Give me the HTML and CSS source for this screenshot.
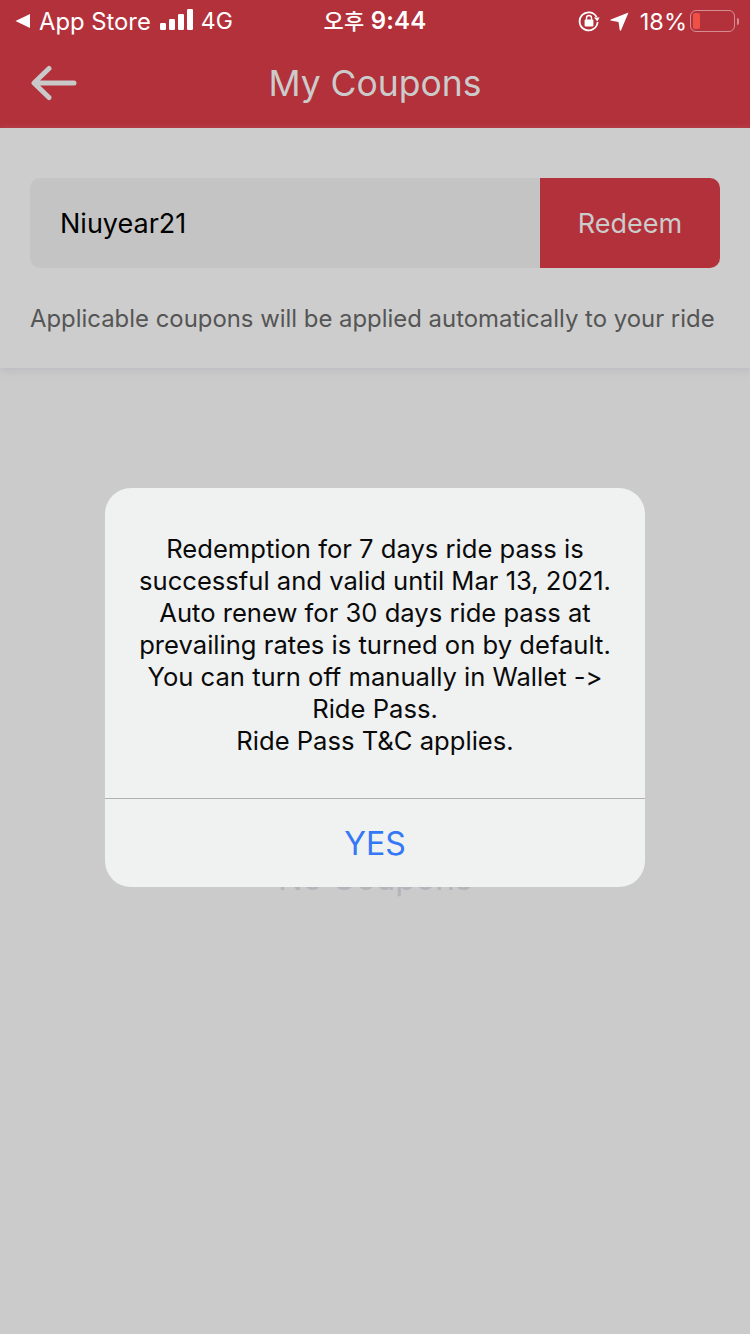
FILE: index.html
```html
<!DOCTYPE html>
<html lang="en">
<head>
<meta charset="utf-8">
<title>My Coupons</title>
<link rel="stylesheet" href="styles.css">
</head>
<body>
<div class="screen">
  <header class="header">
    <div class="status">
      <div class="status-left">
        <svg class="back-tri" width="16" height="16" viewBox="0 0 16 16"><path d="M0.5 8 L15 1 V15 Z" fill="#fff"/></svg>
        <span class="status-app">App Store</span>
        <svg class="signal" width="34" height="22" viewBox="0 0 34 22"><rect x="0" y="14" width="6" height="7" rx="1.2" fill="#fff"/><rect x="9" y="10" width="6" height="11" rx="1.2" fill="#fff"/><rect x="18" y="5" width="6" height="16" rx="1.2" fill="#fff"/><rect x="27" y="0" width="6" height="21" rx="1.2" fill="#fff"/></svg>
        <span class="status-net">4G</span>
      </div>
      <div class="status-time"><span class="ko">오후</span> 9:44</div>
      <div class="status-right">
        <svg class="lock" width="22" height="22" viewBox="0 0 22 22"><path d="M18.6 7.2 A9 9 0 1 0 19.6 12" fill="none" stroke="#fff" stroke-width="1.8"/><path d="M16 7.5 L21.6 7.5 L19.3 11.6 Z" fill="#fff"/><rect x="6.6" y="9.6" width="8.8" height="6.8" rx="1" fill="#fff"/><path d="M8.5 10 V8 A2.5 2.5 0 0 1 13.5 8 V10" fill="none" stroke="#fff" stroke-width="1.4"/></svg>
        <svg class="loc" width="19" height="19" viewBox="0 0 20 20"><path d="M19.5 0.5 L11.5 19.5 Q10.6 20 10.2 19 L9 10.6 L0.6 9 Q0 8.2 0.8 7.8 Z" fill="#fff"/></svg>
        <span class="status-pct">18%</span>
        <div class="battery"><div class="battery-level"></div></div>
        <div class="battery-tip"></div>
      </div>
    </div>
    <nav class="nav">
      <svg class="nav-back" width="46" height="36" viewBox="0 0 46 36"><path d="M43 18 H4 M18 3.5 L3 18 L18 32.5" fill="none" stroke="#c9c9c9" stroke-width="5" stroke-linecap="round" stroke-linejoin="round"/></svg>
      <h1 class="nav-title">My Coupons</h1>
    </nav>
  </header>

  <section class="panel">
    <div class="code-row">
      <div class="code-input">Niuyear21</div>
      <div class="code-btn">Redeem</div>
    </div>
    <p class="hint">Applicable coupons will be applied automatically to your ride</p>
  </section>

  <main class="empty">
    <div class="empty-label">No Coupons</div>
  </main>

  <div class="dialog">
    <div class="dialog-body">Redemption for 7 days ride pass is<br>successful and valid until Mar 13, 2021.<br>Auto renew for 30 days ride pass at<br>prevailing rates is turned on by default.<br>You can turn off manually in Wallet -&gt;<br>Ride Pass.<br>Ride Pass T&amp;C applies.</div>
    <div class="dialog-action">YES</div>
  </div>
</div>
</body>
</html>
```
FILE: styles.css
```css
* { box-sizing: border-box; }
html, body { margin: 0; padding: 0; }
body {
  width: 750px;
  height: 1334px;
  overflow: hidden;
  font-family: Inter, "Noto Sans CJK KR", sans-serif;
  font-feature-settings: "calt" 0;
}
.screen {
  position: relative;
  width: 750px;
  height: 1334px;
  background: #cbcbcb;
  display: flex;
  flex-direction: column;
}
.header {
  height: 128px;
  background: #b3313a;
  flex: none;
}
.status {
  height: 40px;
  position: relative;
  display: flex;
  align-items: center;
  justify-content: space-between;
  padding: 2px 11px 0 15px;
  color: #fff;
}
.status-left, .status-right { display: flex; align-items: center; }
.status-app { font-size: 23.8px; margin-left: 8px; }
.signal { margin-left: 9px; margin-top: -2px; }
.status-net { font-size: 23px; margin-left: 7px; }
.status-time {
  position: absolute;
  left: 0;
  right: 0;
  top: 2px;
  line-height: 38px;
  text-align: center;
  font-size: 24px;
  font-weight: 600;
  letter-spacing: 0.2px;
}
.ko { font-weight: 500; font-size: 22px; }
.loc { margin-left: 10px; }
.status-pct { font-size: 23.5px; margin-left: 11px; }
.battery {
  width: 45px;
  height: 22px;
  margin-left: 3px;
  border: 1.5px solid rgba(255,255,255,0.45);
  border-radius: 6px;
  padding: 2px;
}
.battery-level { width: 7px; height: 100%; background: #ee5146; border-radius: 2px; }
.battery-tip {
  width: 2px;
  height: 7px;
  margin-left: 2px;
  background: rgba(255,255,255,0.45);
  border-radius: 0 2px 2px 0;
}
.nav {
  height: 88px;
  position: relative;
  display: flex;
  align-items: center;
  justify-content: center;
}
.nav-back { position: absolute; left: 31px; top: 25px; }
.nav-title {
  margin: 0;
  position: relative;
  top: -1px;
  font-size: 35.5px;
  font-weight: 400;
  color: #cbcbcb;
}
.panel {
  flex: none;
  height: 240px;
  background: #cdcdcd;
  padding: 50px 30px 0;
  box-shadow: 0 3px 8px rgba(170,170,185,0.45);
}
.code-row {
  display: flex;
  height: 90px;
  border-radius: 10px;
  overflow: hidden;
}
.code-input {
  flex: 1;
  background: #c4c4c4;
  padding-left: 30px;
  font-size: 27px;
  line-height: 92px;
  color: #000;
}
.code-btn {
  width: 180px;
  background: #b3313a;
  color: #cbcbcb;
  font-size: 27px;
  line-height: 92px;
  text-align: center;
}
.hint {
  margin: 36px 0 0;
  font-size: 23.9px;
  line-height: 30px;
  color: #555;
  white-space: nowrap;
}
.empty {
  flex: 1;
  text-align: center;
  padding-top: 490px;
}
.empty-label {
  font-size: 33px;
  line-height: 40px;
  color: #b4b4bb;
}
.dialog {
  position: absolute;
  left: 105px;
  top: 488px;
  width: 540px;
  height: 399px;
  background: #f0f1f1;
  border-radius: 26px;
  display: flex;
  flex-direction: column;
}
.dialog-body {
  height: 311px;
  padding-top: 45px;
  border-bottom: 1px solid #b2b2b2;
  text-align: center;
  font-size: 25.6px;
  line-height: 32px;
  color: #0a0a0a;
  white-space: nowrap;
}
.dialog-action {
  flex: 1;
  display: flex;
  align-items: center;
  justify-content: center;
  font-size: 32px;
  color: #3478f6;
}
```
